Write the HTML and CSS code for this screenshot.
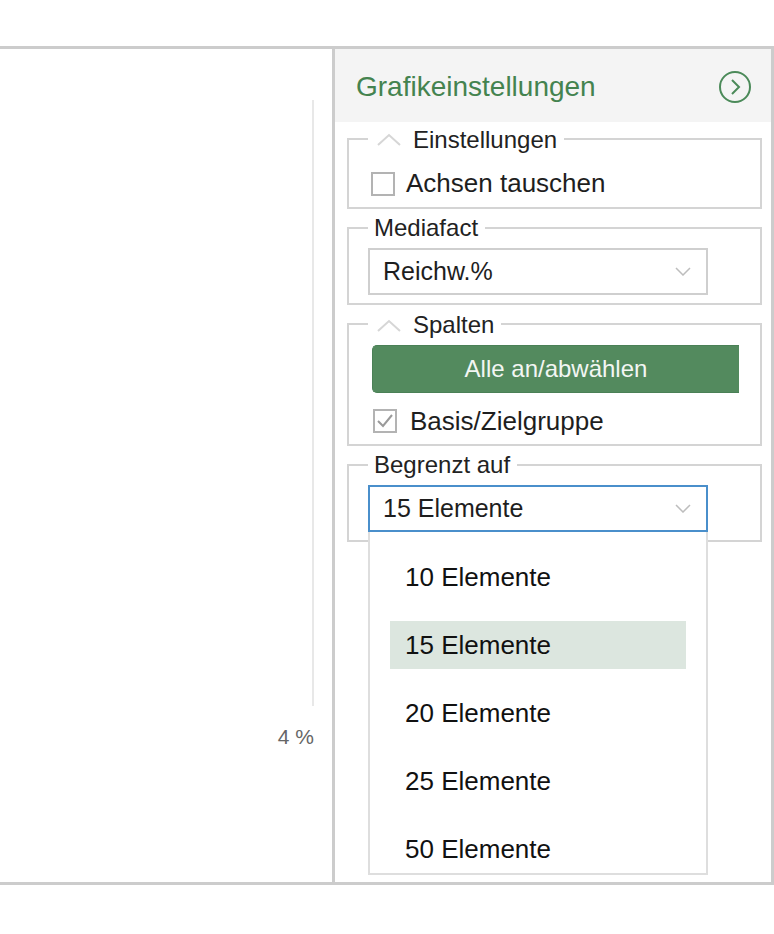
FILE: index.html
```html
<!DOCTYPE html>
<html lang="de">
<head>
<meta charset="utf-8">
<title>Grafikeinstellungen</title>
<link rel="stylesheet" href="styles.css">
</head>
<body>
<div class="frame">
  <div class="chart">
    <div class="axis"></div>
    <div class="axis-label">4 %</div>
  </div>
  <div class="panel">
    <div class="panel-head">
      <span class="title">Grafikeinstellungen</span>
      <svg class="head-icon" width="34" height="34" viewBox="0 0 34 34"><circle cx="17" cy="17" r="15" fill="none" stroke="#4b8a59" stroke-width="2"/><polyline points="14,10 21,17 14,24" fill="none" stroke="#4b8a59" stroke-width="2"/></svg>
    </div>

    <fieldset class="group first">
      <legend><span class="leg"><svg class="chev-up" width="24" height="13" viewBox="0 0 24 13"><polyline points="1,12 12,2 23,12" fill="none" stroke="#d6d6d6" stroke-width="2"/></svg>Einstellungen</span></legend>
      <label class="check"><span class="box"></span>Achsen tauschen</label>
    </fieldset>

    <fieldset class="group">
      <legend><span class="leg">Mediafact</span></legend>
      <div class="select">
        <span>Reichw.%</span>
        <svg width="16" height="9" viewBox="0 0 16 9"><polyline points="1,1 8,8 15,1" fill="none" stroke="#bdbdbd" stroke-width="1.5"/></svg>
      </div>
    </fieldset>

    <fieldset class="group">
      <legend><span class="leg"><svg class="chev-up" width="24" height="13" viewBox="0 0 24 13"><polyline points="1,12 12,2 23,12" fill="none" stroke="#d6d6d6" stroke-width="2"/></svg>Spalten</span></legend>
      <button class="btn" type="button">Alle an/abwählen</button>
      <label class="check check-b"><span class="box checked"><svg width="20" height="20" viewBox="0 0 20 20"><polyline points="3,10 8,15 17,4" fill="none" stroke="#9a9a9a" stroke-width="2"/></svg></span>Basis/Zielgruppe</label>
    </fieldset>

    <fieldset class="group">
      <legend><span class="leg">Begrenzt auf</span></legend>
      <div class="select-wrap">
        <div class="select open">
          <span>15 Elemente</span>
          <svg width="16" height="9" viewBox="0 0 16 9"><polyline points="1,1 8,8 15,1" fill="none" stroke="#bdbdbd" stroke-width="1.5"/></svg>
        </div>
        <ul class="dropdown">
          <li>10 Elemente</li>
          <li class="active">15 Elemente</li>
          <li>20 Elemente</li>
          <li>25 Elemente</li>
          <li>50 Elemente</li>
        </ul>
      </div>
    </fieldset>
  </div>
</div>
</body>
</html>
```
FILE: styles.css
```css
* { box-sizing: border-box; }
html, body { margin: 0; padding: 0; background: #fff; }
body {
  font-family: "Liberation Sans", Arial, Helvetica, sans-serif;
  color: #1e1e1e;
}
.frame {
  margin-top: 46px;
  width: 774px;
  height: 839px;
  border-top: 3px solid #cccccc;
  border-right: 3px solid #cccccc;
  border-bottom: 3px solid #cccccc;
  display: flex;
}
.chart {
  width: 335px;
  flex: none;
  border-right: 3px solid #cccccc;
  padding: 51px 18px 0 0;
  display: flex;
  flex-direction: column;
  align-items: flex-end;
}
.axis {
  width: 2px;
  height: 606px;
  background: #e8e8e8;
}
.axis-label {
  margin-top: 19px;
  font-size: 21px;
  line-height: 24px;
  color: #666;
}
.panel {
  flex: 1;
  min-width: 0;
}
.panel-head {
  height: 73px;
  background: #f4f4f4;
  display: flex;
  align-items: center;
  justify-content: space-between;
  padding: 0 19px 0 21px;
}
.title {
  font-size: 28px;
  color: #44834f;
  line-height: 32px;
  padding-top: 3px;
}
.head-icon { display: block; margin-top: 2px; }
.group {
  margin: 7px 9px 0 12px;
  padding: 8px 21px 8px 19px;
  border: 2px solid #d4d4d4;
  min-width: 0;
}
.group.first {
  margin-top: 4px;
  padding-top: 17px;
}
.group legend {
  padding: 0 7px 0 6px;
  font-size: 24px;
  line-height: 24px;
  color: #222;
}
.leg {
  display: inline-flex;
  align-items: center;
}
.chev-up {
  margin: 0 12px 0 3px;
  display: block;
}
.check {
  display: flex;
  align-items: center;
  height: 30px;
  font-size: 26px;
  gap: 11px;
  margin-left: 3px;
  color: #1e1e1e;
}
.check-b {
  margin-top: 13px;
  margin-left: 5px;
  gap: 13px;
}
.box {
  width: 24px;
  height: 24px;
  border: 2px solid #b3b3b3;
  flex: none;
  display: flex;
  align-items: center;
  justify-content: center;
}
.box svg { display: block; }
.select {
  width: 340px;
  height: 47px;
  border: 2px solid #cfcfcf;
  display: flex;
  align-items: center;
  justify-content: space-between;
  padding: 0 15px 0 13px;
  font-size: 25px;
  color: #1e1e1e;
  background: #fff;
}
.select svg { display: block; }
.select.open {
  border-color: #4a8fcb;
}
.select-wrap {
  position: relative;
  width: 340px;
}
.dropdown {
  position: absolute;
  top: 100%;
  left: 0;
  width: 340px;
  margin: 0;
  padding: 21px 20px 0 20px;
  list-style: none;
  background: #fff;
  border: 2px solid #dedede;
  border-top: none;
  display: flex;
  flex-direction: column;
  gap: 20px;
  z-index: 5;
}
.dropdown li {
  height: 48px;
  line-height: 48px;
  padding-left: 15px;
  font-size: 26px;
  color: #111;
}
.dropdown li.active {
  background: #dce6df;
}
.btn {
  display: block;
  width: 367px;
  height: 48px;
  margin-left: 4px;
  border: 1px solid #4a8056;
  border-right: none;
  border-radius: 5px 0 0 5px;
  background: #538a5e;
  color: #f2f6f3;
  font-family: inherit;
  font-size: 24px;
  padding: 0;
  text-align: center;
}
```
